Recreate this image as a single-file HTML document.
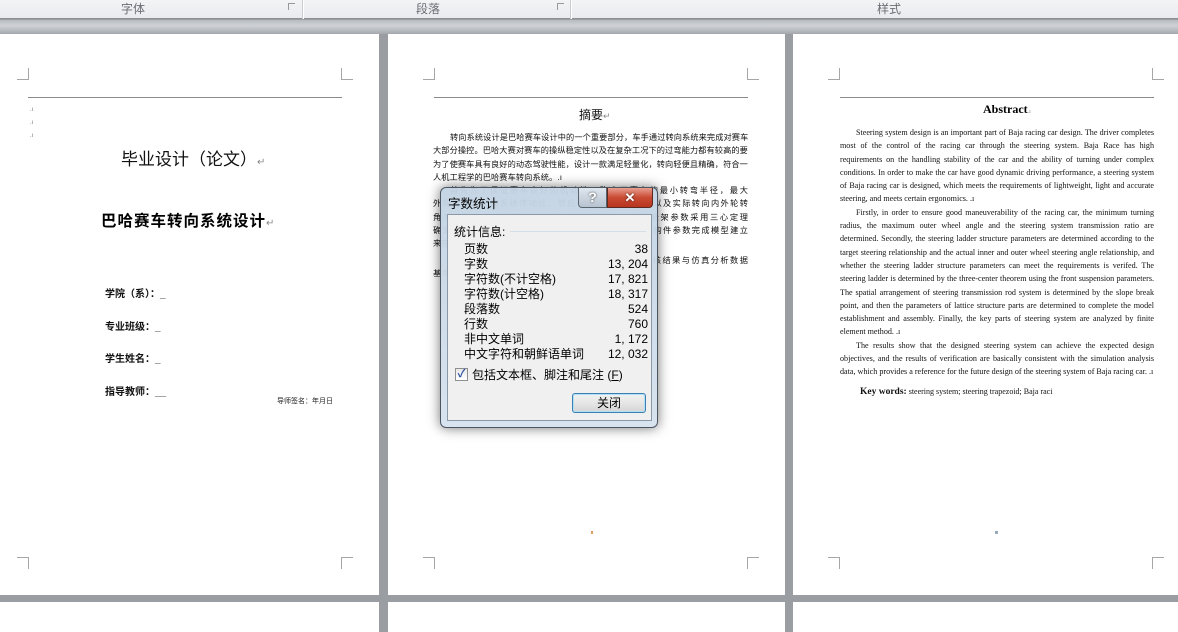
<!DOCTYPE html>
<html><head><meta charset="utf-8"><style>
*{margin:0;padding:0;box-sizing:border-box}
body{width:1178px;height:627px;overflow:hidden;background:#9a9da2;position:relative;font-family:"Liberation Sans","Noto Sans CJK SC",sans-serif}
.abs{position:absolute}
#rib{left:0;top:0;width:1178px;height:19px;background:linear-gradient(#f3f4f6,#e9ebee);border-bottom:1px solid #8c8f94;color:#6a6d73;font-size:12px}
#band{left:0;top:20px;width:1178px;height:14px;background:linear-gradient(#b8bbc0,#cfd1d5 40%,#a5a8ad)}
.sep{top:0;width:2px;height:19px;border-left:1px solid #c9ccd1;background:#fff}
.page{background:#fff;top:34px;height:561px}
.page2{background:#fff;top:602px;height:30px}
.c{position:absolute;width:12px;height:12px;border-color:#a6a6a6;border-style:solid;border-width:0}
.hl{position:absolute;height:1px;background:#8a8a8a}
.t2 div{height:13.3px;font-size:8.2px;line-height:13.3px;white-space:nowrap;overflow:hidden;letter-spacing:0.1px;color:#111;text-align:justify;text-align-last:justify}
.t3{font-family:"Liberation Serif",serif;font-size:8.1px;line-height:13.3px;color:#111;text-align:justify;text-align-last:justify}
.t3 div{height:13.3px;white-space:nowrap}
#dlg{left:440px;top:187px;width:218px;height:241px;border-radius:6px;background:linear-gradient(180deg,rgba(196,212,228,.96),rgba(214,226,238,.96));border:1px solid #4a5561;box-shadow:0 0 12px rgba(0,0,0,.55)}
#inner{left:6px;top:26px;width:205px;height:207px;background:#f0f0f0;border:1px solid #8a98a8}
.row{position:absolute;left:16px;width:184px;font-size:12px;height:15px;line-height:15px;color:#000}
.row span{position:absolute;right:0}
</style></head><body>
<div id="rib" class="abs">
 <div class="abs" style="left:121px;top:0">字体</div>
 <div class="abs" style="left:288px;top:3px;width:7px;height:7px;border-left:1px solid #999;border-top:1px solid #999"></div>
 <div class="abs sep" style="left:302px"></div>
 <div class="abs" style="left:416px;top:0">段落</div>
 <div class="abs" style="left:557px;top:3px;width:7px;height:7px;border-left:1px solid #999;border-top:1px solid #999"></div>
 <div class="abs sep" style="left:570px"></div>
 <div class="abs" style="left:877px;top:0">样式</div>
</div>
<div id="band" class="abs"></div>

<div class="abs page" style="left:0;width:379px">
 <div class="c" style="left:17px;top:34px;border-right-width:1px;border-bottom-width:1px"></div>
 <div class="c" style="left:341px;top:34px;border-left-width:1px;border-bottom-width:1px"></div>
 <div class="hl" style="left:28px;top:63px;width:314px"></div>
 <div class="abs" style="left:30px;top:70px;font-size:6px;color:#777;line-height:13px">.ı<br>.ı<br>.ı</div>
 <div class="abs" style="left:121px;top:111px;font-size:17px;color:#111">毕业设计（论文）<span style="font-size:10px;color:#888">↵</span></div>
 <div class="abs" style="left:101px;top:175px;font-size:15.5px;font-weight:bold;letter-spacing:1px;color:#000">巴哈赛车转向系统设计<span style="font-size:10px;color:#888;font-weight:normal">↵</span></div>
 <div class="abs" style="left:105px;top:245px;font-size:10px;line-height:32.7px;font-weight:bold;color:#111">学院（系）：_<br>专业班级：_<br>学生姓名：_<br>指导教师：__</div>
 <div class="abs" style="left:277px;top:362px;font-size:7px;color:#222">导师签名：年月日</div>
 <div class="c" style="left:17px;top:523px;border-right-width:1px;border-top-width:1px"></div>
 <div class="c" style="left:341px;top:523px;border-left-width:1px;border-top-width:1px"></div>
</div>

<div class="abs page" style="left:388px;width:397px">
 <div class="c" style="left:35px;top:34px;border-right-width:1px;border-bottom-width:1px"></div>
 <div class="c" style="left:359px;top:34px;border-left-width:1px;border-bottom-width:1px"></div>
 <div class="hl" style="left:46px;top:63px;width:314px"></div>
 <div class="abs" style="left:191px;top:72px;font-size:12px;color:#111">摘要<span style="font-size:9px;color:#888">↵</span></div>
 <div class="abs t2" style="left:45px;top:97px;width:315px">
  <div style="padding-left:17px">转向系统设计是巴哈赛车设计中的一个重要部分，车手通过转向系统来完成对赛车的</div>
  <div>大部分操控。巴哈大赛对赛车的操纵稳定性以及在复杂工况下的过弯能力都有较高的要求。</div>
  <div>为了使赛车具有良好的动态驾驶性能，设计一款满足轻量化，转向轻便且精确，符合一定</div>
  <div style="text-align-last:left">人机工程学的巴哈赛车转向系统。.ı</div>
  <div style="padding-left:17px">首先为了保证赛车良好的机动性，确定了赛车的最小转弯半径，最大</div>
  <div>外轮转角和转向系统传动比，然后根据目标转向关系以及实际转向内外轮转</div>
  <div>角关系确定转向梯形结构参数，并进行验证，由前悬架参数采用三心定理</div>
  <div>确定转向梯形，利用折点确定转向拉杆系统布置，结构件参数完成模型建立</div>
  <div style="text-align-last:left">来完成装配，最后对关键零件进行有限元分析。</div>
  <div style="padding-left:17px;margin-top:3px">结果表明设计的转向系统能够达到预期目标，校核结果与仿真分析数据</div>
  <div style="text-align-last:left">基本一致。</div>
 </div>
 <div class="abs" style="left:203px;top:497px;width:2px;height:3px;background:#e0a060"></div>
 <div class="c" style="left:35px;top:523px;border-right-width:1px;border-top-width:1px"></div>
 <div class="c" style="left:359px;top:523px;border-left-width:1px;border-top-width:1px"></div>
</div>

<div class="abs page" style="left:793px;width:385px">
 <div class="c" style="left:35px;top:34px;border-right-width:1px;border-bottom-width:1px"></div>
 <div class="c" style="left:359px;top:34px;border-left-width:1px;border-bottom-width:1px"></div>
 <div class="hl" style="left:47px;top:63px;width:314px"></div>
 <div class="abs" style="left:190px;top:68px;font-family:'Liberation Serif',serif;font-size:12px;font-weight:bold;color:#000">Abstract<span style="font-size:6px;color:#888;font-weight:normal">.ı</span></div>
 <div class="abs t3" style="left:47px;top:92px;width:314px">
  <div style="padding-left:16px">Steering system design is an important part of Baja racing car design. The driver completes</div>
  <div>most of the control of the racing car through the steering system. Baja Race has high</div>
  <div>requirements on the handling stability of the car and the ability of turning under complex</div>
  <div>conditions. In order to make the car have good dynamic driving performance, a steering system</div>
  <div>of Baja racing car is designed, which meets the requirements of lightweight, light and accurate</div>
  <div style="text-align-last:left">steering, and meets certain ergonomics. .ı</div>
  <div style="padding-left:16px">Firstly, in order to ensure good maneuverability of the racing car, the minimum turning</div>
  <div>radius, the maximum outer wheel angle and the steering system transmission ratio are</div>
  <div>determined. Secondly, the steering ladder structure parameters are determined according to the</div>
  <div>target steering relationship and the actual inner and outer wheel steering angle relationship, and</div>
  <div>whether the steering ladder structure parameters can meet the requirements is verifed. The</div>
  <div>steering ladder is determined by the three-center theorem using the front suspension parameters.</div>
  <div>The spatial arrangement of steering transmission rod system is determined by the slope break</div>
  <div>point, and then the parameters of lattice structure parts are determined to complete the model</div>
  <div>establishment and assembly. Finally, the key parts of steering system are analyzed by finite</div>
  <div style="text-align-last:left">element method. .ı</div>
  <div style="padding-left:16px">The results show that the designed steering system can achieve the expected design</div>
  <div>objectives, and the results of verification are basically consistent with the simulation analysis</div>
  <div style="text-align-last:left">data, which provides a reference for the future design of the steering system of Baja racing car. .ı</div>
 </div>
 <div class="abs" style="left:67px;top:353px;font-family:'Liberation Serif',serif;font-size:8px;color:#111;white-space:nowrap"><b style="font-size:9.5px">Key words:</b> steering system; steering trapezoid; Baja raci</div>
 <div class="abs" style="left:202px;top:497px;width:3px;height:3px;background:#9ab"></div>
 <div class="c" style="left:35px;top:523px;border-right-width:1px;border-top-width:1px"></div>
 <div class="c" style="left:359px;top:523px;border-left-width:1px;border-top-width:1px"></div>
</div>

<div class="abs page2" style="left:0;width:379px"></div>
<div class="abs page2" style="left:388px;width:397px"></div>
<div class="abs page2" style="left:793px;width:385px"></div>

<div id="dlg" class="abs">
 <div class="abs" style="left:7px;top:5px;font-size:12.5px;color:#000">字数统计</div>
 <div class="abs" style="left:137px;top:0;width:29px;height:20px;border:1px solid #5a6570;border-top:none;border-radius:0 0 0 4px;background:linear-gradient(#dfe6ee,#b6c3d0);color:#fff;font-weight:bold;font-size:14px;text-align:center;line-height:19px;text-shadow:0 0 2px #333">?</div>
 <div class="abs" style="left:166px;top:0;width:46px;height:20px;border:1px solid #5a2a20;border-top:none;border-radius:0 0 4px 0;background:linear-gradient(#e8a090,#c94a33 50%,#b83520);color:#fff;font-weight:bold;font-size:13px;text-align:center;line-height:19px;text-shadow:0 0 2px #422">✕</div>
 <div id="inner" class="abs">
  <div class="abs" style="left:6px;top:8px;font-size:12px;color:#000">统计信息:</div>
  <div class="abs" style="left:62px;top:16px;width:136px;height:1px;background:#d5dfe8"></div>
  <div class="row" style="top:27px">页数<span>38</span></div>
  <div class="row" style="top:42px">字数<span>13, 204</span></div>
  <div class="row" style="top:57px">字符数(不计空格)<span>17, 821</span></div>
  <div class="row" style="top:72px">字符数(计空格)<span>18, 317</span></div>
  <div class="row" style="top:87px">段落数<span>524</span></div>
  <div class="row" style="top:102px">行数<span>760</span></div>
  <div class="row" style="top:117px">非中文单词<span>1, 172</span></div>
  <div class="row" style="top:132px">中文字符和朝鲜语单词<span>12, 032</span></div>
  <div class="abs" style="left:7px;top:153px;width:13px;height:13px;border:1px solid #8f8f8f;background:linear-gradient(#e8e8e8,#fff);color:#2a4fa0;font-size:11px;line-height:11px;text-align:center;font-weight:bold">✓</div>
  <div class="abs" style="left:24px;top:151px;font-size:12px;color:#000">包括文本框、脚注和尾注 (<u>F</u>)</div>
  <div class="abs" style="left:124px;top:178px;width:74px;height:20px;border:1px solid #3c7fb1;border-radius:3px;background:linear-gradient(#f2f2f2,#e6e6e6 50%,#d4d4d4);box-shadow:inset 0 0 0 1px #aee0f7;font-size:12px;text-align:center;line-height:18px;color:#000">关闭</div>
 </div>
</div>
</body></html>
